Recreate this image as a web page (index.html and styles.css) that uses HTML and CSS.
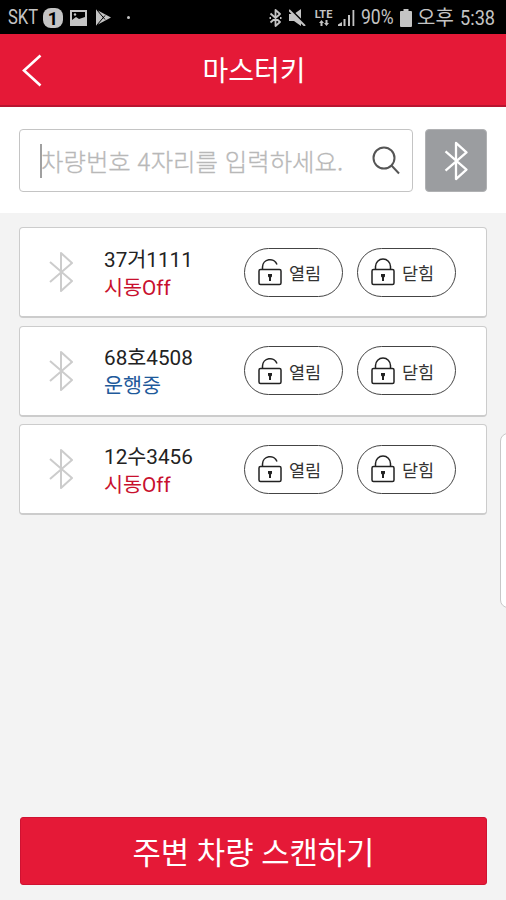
FILE: index.html
```
<!DOCTYPE html>
<html lang="ko">
<head>
    <meta charset="UTF-8">
    <meta name="viewport" content="width=device-width, initial-scale=1.0">
    <title>마스터키</title>
    <link rel="stylesheet" href="styles.css">
</head>
<body>
    <svg class="symbols">
        <symbol id="bluetooth" viewBox="0 0 24 42">
            <path d="M1 11 L23 30 L12 40 V2 L23 12 L1 31"/>
        </symbol>
        <symbol id="unlock" viewBox="0 0 24 28">
            <path d="M4.5 11 V9 A7.5 7.5 0 0 1 19 6.5"/>
            <rect x="1" y="11.5" width="22" height="15" rx="1.5"/>
            <path class="keyhole" d="M10 16h4v2.600l-1 1V23h-2v-3.400l-1-1z"/>
        </symbol>
        <symbol id="lock" viewBox="0 0 24 28">
            <path d="M4.5 11 V8.5 A7.5 7.5 0 0 1 19.5 8.5 V11"/>
            <rect x="1" y="11.5" width="22" height="15" rx="1.5"/>
            <path class="keyhole" d="M10 16h4v2.600l-1 1V23h-2v-3.400l-1-1z"/>
        </symbol>
    </svg>

    <div class="status-bar">
        <div class="status-left">
            <span class="carrier">SKT</span>
            <span class="sim">1</span>
            <svg class="picture" width="17" height="16" viewBox="0 0 17 16">
                <path fill-rule="evenodd" d="M0 0h17v16H0z M2 2v8l4-3 3 2 6-2V2z"/>
                <circle cx="5" cy="4.5" r="1.2"/>
            </svg>
            <svg class="play" width="17" height="17" viewBox="0 0 17 17">
                <path d="M1 0.5 L16 8.5 L1 16.5z"/>
                <path class="cut" d="M2 1 L10 10.5 M2 16 L10 6.5"/>
            </svg>
            <span class="dot"></span>
        </div>
        <div class="status-right">
            <svg class="status-bt" width="13" height="18" viewBox="0 0 13 18">
                <path d="M1.5 4.5 L11 13 L6.5 17 V1 L11 5 L1.5 13.5 M0.5 9h1.5 M11 9h1.5"/>
            </svg>
            <svg class="mute" width="17" height="17" viewBox="0 0 17 17">
                <path d="M0 5h5l7-5v17l-7-5H0z"/>
                <path class="slash" d="M1 0 L17 16"/>
                <path class="line" d="M0 1 L16 17"/>
            </svg>
            <span class="lte">
                <b>LTE</b>
                <svg width="10" height="6" viewBox="0 0 10 6"><path d="M2.5 0 L5 3H3.5V6H1.5V3H0z M7.5 6 L10 3H8.5V0H6.5V3H5z"/></svg>
            </span>
            <svg class="signal" width="17" height="16" viewBox="0 0 17 16">
                <path d="M0 16v-1.5L4 12v4z M5.5 9h2v7h-2z M10 5h2v11h-2z M14.5 0h1.8v16h-1.8z"/>
            </svg>
            <span class="percent">90%</span>
            <svg class="battery" width="12" height="18" viewBox="0 0 12 18">
                <path d="M3.5 0h5v2H11a1 1 0 0 1 1 1v14a1 1 0 0 1-1 1H1a1 1 0 0 1-1-1V3a1 1 0 0 1 1-1h2.500z"/>
            </svg>
            <span class="ampm">오후</span>
            <span class="time">5:38</span>
        </div>
    </div>

    <header class="header">
        <svg class="back" width="20" height="33" viewBox="0 0 20 33">
            <path d="M18.500 1.500 L2 16.500 L18.500 31.500"/>
        </svg>
        <h1>마스터키</h1>
    </header>

    <div class="search">
        <div class="search-box">
            <span class="caret"></span>
            <span class="placeholder">차량번호 4자리를 입력하세요.</span>
            <svg class="search-icon" width="28" height="29" viewBox="0 0 28 29">
                <circle cx="12" cy="12" r="10.500"/>
                <path d="M19.500 19.500 L27 27.500"/>
            </svg>
        </div>
        <div class="bt-button"><svg width="24" height="40"><use href="#bluetooth"/></svg></div>
    </div>

    <main class="list">
        <div class="card">
            <svg class="bt" width="24" height="42"><use href="#bluetooth"/></svg>
            <div class="car">
                <div class="plate">37거1111</div>
                <div class="state off">시동Off</div>
            </div>
            <div class="pill"><svg width="24" height="28"><use href="#unlock"/></svg><span>열림</span></div>
            <div class="pill"><svg width="24" height="28"><use href="#lock"/></svg><span>닫힘</span></div>
        </div>
        <div class="card">
            <svg class="bt" width="24" height="42"><use href="#bluetooth"/></svg>
            <div class="car">
                <div class="plate">68호4508</div>
                <div class="state driving">운행중</div>
            </div>
            <div class="pill"><svg width="24" height="28"><use href="#unlock"/></svg><span>열림</span></div>
            <div class="pill"><svg width="24" height="28"><use href="#lock"/></svg><span>닫힘</span></div>
        </div>
        <div class="card">
            <svg class="bt" width="24" height="42"><use href="#bluetooth"/></svg>
            <div class="car">
                <div class="plate">12수3456</div>
                <div class="state off">시동Off</div>
            </div>
            <div class="pill"><svg width="24" height="28"><use href="#unlock"/></svg><span>열림</span></div>
            <div class="pill"><svg width="24" height="28"><use href="#lock"/></svg><span>닫힘</span></div>
        </div>
    </main>

    <div class="scan-button">주변 차량 스캔하기</div>
    <div class="edge-handle"></div>
</body>
</html>
```
FILE: styles.css
```
* {
    box-sizing: border-box;
}

body {
    display: flex;
    flex-direction: column;
    position: relative;
    height: 900px;
    margin: 0;
    overflow: hidden;
    background-color: #f3f3f3;
    font-family: Roboto, "Noto Sans CJK KR", sans-serif;
}

svg {
    display: block;
    flex: none;
    fill: none;
    stroke-linejoin: round;
}

.symbols {
    position: absolute;
    width: 0;
    height: 0;
}

/* status bar */
.status-bar {
    display: flex;
    justify-content: space-between;
    height: 34px;
    padding: 1px 11px 0 8px;
    background-color: #000000;
    color: #c4c4c4;
    font-size: 19.5px;
    line-height: 34px;
    white-space: nowrap;
}

.status-left, .status-right {
    display: flex;
    align-items: center;
}

.status-left svg, .status-right svg {
    fill: #c4c4c4;
}

.carrier {
    width: 30px;
    margin-right: 5px;
    transform: scaleX(0.85);
    transform-origin: left;
}

.sim {
    width: 20px;
    height: 20px;
    margin-right: 7px;
    border-radius: 8px;
    background-color: #c4c4c4;
    color: #000000;
    font-size: 18px;
    font-weight: 700;
    line-height: 21px;
    text-align: center;
}

.picture {
    margin-right: 8px;
}

.play .cut {
    stroke: #000000;
    stroke-width: 1;
    fill: none;
}

.dot {
    width: 3px;
    height: 3px;
    margin-left: 15px;
    border-radius: 50%;
    background-color: #c4c4c4;
}

.status-right .status-bt {
    margin-right: 7px;
    fill: none;
    stroke: #c4c4c4;
    stroke-width: 1.8;
}

.mute {
    margin-right: 8px;
}

.mute .slash {
    stroke: #000000;
    stroke-width: 2;
}

.mute .line {
    stroke: #c4c4c4;
    stroke-width: 2;
}

.lte {
    display: flex;
    flex-direction: column;
    align-items: center;
    width: 19px;
    margin-right: 5px;
    font-size: 11px;
    line-height: 10px;
}

.signal {
    margin-right: 6px;
}

.percent {
    width: 34px;
    margin-right: 5px;
    transform: scaleX(0.9);
    transform-origin: left;
}

.battery {
    margin-right: 5px;
}

.ampm {
    width: 38px;
    margin-right: 5px;
    font-size: 20px;
    line-height: 36px;
}

.time {
    width: 35px;
    font-size: 20px;
    transform: scaleX(0.91);
    transform-origin: left;
}

/* title bar */
.header {
    display: flex;
    align-items: center;
    height: 73px;
    padding: 2px 22px 0;
    border-bottom: 2px solid #b81430;
    background-color: #e51937;
    color: #ffffff;
}

.back {
    stroke: #ffffff;
    stroke-width: 2.6;
    stroke-linejoin: miter;
}

.header h1 {
    flex: 1;
    margin: 2px 18px 0 0;
    font-size: 28px;
    font-weight: 400;
    line-height: 40px;
    text-align: center;
}

/* search */
.search {
    display: flex;
    gap: 12px;
    height: 106px;
    padding: 22px 19px 0;
    background-color: #ffffff;
}

.search-box {
    display: flex;
    flex: 1;
    align-items: center;
    height: 63px;
    padding: 0 12px 0 20px;
    border: 1px solid #c4c4c4;
    border-radius: 4px;
}

.caret {
    width: 2px;
    height: 34px;
    background-color: #a0a0a0;
}

.placeholder {
    flex: 1;
    margin-left: -1px;
    color: #b8b8b8;
    font-family: "Noto Sans CJK KR", sans-serif;
    font-size: 24.4px;
    font-weight: 300;
    line-height: 36px;
    white-space: nowrap;
    -webkit-text-stroke: 0.3px #b8b8b8;
}

.search-icon {
    stroke: #555555;
    stroke-width: 2;
}

.bt-button {
    display: flex;
    align-items: center;
    justify-content: center;
    width: 62px;
    height: 63px;
    border: 1px solid #b0b1b3;
    border-radius: 4px;
    background-color: #9b9da0;
    stroke: #ffffff;
    stroke-width: 2.4;
}

/* cars */
.list {
    display: flex;
    flex-direction: column;
    gap: 7.5px;
    padding: 14px 19px 0;
}

.card {
    display: flex;
    align-items: center;
    height: 91px;
    padding-left: 29px;
    border: 1px solid #cccccc;
    border-bottom-width: 2px;
    border-radius: 4px;
    background-color: #ffffff;
}

.bt {
    stroke: #cccccc;
    stroke-width: 2;
}

.car {
    width: 140px;
    margin-left: 31px;
    padding-top: 3px;
    font-size: 20.7px;
    line-height: 28px;
}

.plate {
    color: #222222;
}

.off {
    color: #c8102e;
}

.driving {
    color: #1f5a9b;
}

.pill {
    display: flex;
    align-items: center;
    width: 99px;
    height: 49px;
    margin-right: 14px;
    padding-left: 13px;
    border: 1px solid #444444;
    border-radius: 25px;
    color: #333333;
    font-size: 17.5px;
    stroke: #222222;
    stroke-width: 1.5;
}

.pill span {
    margin: 1px 0 0 7px;
}

.keyhole {
    fill: #222222;
    stroke: none;
}

.scan-button {
    height: 68px;
    margin: auto 19px 15px 20px;
    border: 1px solid #cf1231;
    border-radius: 3px;
    background-color: #e51937;
    color: #ffffff;
    font-size: 30.8px;
    line-height: 71px;
    text-align: center;
}

/* edge panel handle, lies over the page */
.edge-handle {
    position: absolute;
    top: 433px;
    right: -10px;
    width: 16px;
    height: 175px;
    border: 1px solid #c8c8c8;
    border-radius: 8px;
    background-color: #ffffff;
}
```
